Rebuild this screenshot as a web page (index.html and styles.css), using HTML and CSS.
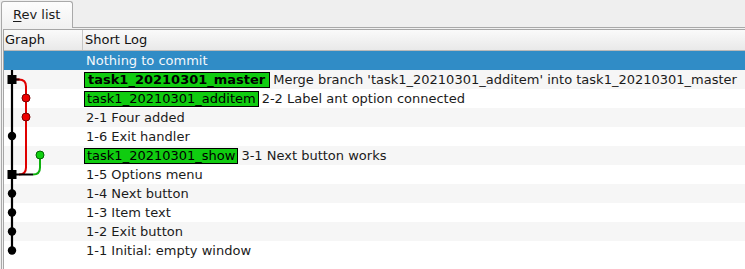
FILE: index.html
```html
<!DOCTYPE html>
<html>
<head>
<meta charset="utf-8">
<link rel="stylesheet" href="styles.css">
</head>
<body>
<div class="tabbar">
  <div class="tab"><span class="mn">R</span>ev list</div>
</div>
<div class="pane">
  <div class="tree">
    <div class="header">
      <div class="hcell hgraph">Graph</div>
      <div class="hcell hlog">Short Log</div>
    </div>
    <div class="rows">
      <svg class="graph-canvas" width="79" height="209" viewBox="0 0 79 209">
        <g transform="translate(-4,-51)">
          <line x1="12" y1="70" x2="12" y2="251" stroke="#000" stroke-width="2.2"/>
          <path d="M16 79.5 H19 Q26 79.5 26 86.5" fill="none" stroke="#e00000" stroke-width="2"/>
          <path d="M16 79.5 H19.5" fill="none" stroke="#300" stroke-width="2"/>
          <line x1="26" y1="86" x2="26" y2="168" stroke="#e00000" stroke-width="2"/>
          <path d="M26 167.5 Q26 174.5 19 174.5" fill="none" stroke="#e00000" stroke-width="2"/>
          <path d="M40 155.5 V167.5 Q40 174.5 33 174.5" fill="none" stroke="#10b010" stroke-width="2"/>
          <path d="M12 174.5 H33" fill="none" stroke="#000" stroke-width="2"/>
          <rect x="7.5" y="75" width="9" height="9" fill="#000"/>
          <rect x="7.5" y="170" width="9" height="9" fill="#000"/>
          <circle cx="26" cy="98" r="4" fill="#ee0000" stroke="#700" stroke-width="1"/>
          <circle cx="26" cy="117" r="4" fill="#ee0000" stroke="#700" stroke-width="1"/>
          <circle cx="40" cy="155" r="4" fill="#10d010" stroke="#060" stroke-width="1"/>
          <circle cx="12" cy="136" r="4.2" fill="#000"/>
          <circle cx="12" cy="193.5" r="4.2" fill="#000"/>
          <circle cx="12" cy="212.5" r="4.2" fill="#000"/>
          <circle cx="12" cy="231.5" r="4.2" fill="#000"/>
          <circle cx="12" cy="250.5" r="4.2" fill="#000"/>
        </g>
      </svg>
      <div class="row sel"><div class="gcell"></div><div class="lcell"><span class="txt">Nothing to commit</span></div></div>
      <div class="row alt"><div class="gcell"></div><div class="lcell"><span class="badge bold">task1_20210301_master</span><span class="msg">Merge branch 'task1_20210301_additem' into task1_20210301_master</span></div></div>
      <div class="row"><div class="gcell"></div><div class="lcell"><span class="badge">task1_20210301_additem</span><span class="msg">2-2 Label ant option connected</span></div></div>
      <div class="row alt"><div class="gcell"></div><div class="lcell"><span class="txt">2-1 Four added</span></div></div>
      <div class="row"><div class="gcell"></div><div class="lcell"><span class="txt">1-6 Exit handler</span></div></div>
      <div class="row alt"><div class="gcell"></div><div class="lcell"><span class="badge">task1_20210301_show</span><span class="msg">3-1 Next button works</span></div></div>
      <div class="row"><div class="gcell"></div><div class="lcell"><span class="txt">1-5 Options menu</span></div></div>
      <div class="row alt"><div class="gcell"></div><div class="lcell"><span class="txt">1-4 Next button</span></div></div>
      <div class="row"><div class="gcell"></div><div class="lcell"><span class="txt">1-3 Item text</span></div></div>
      <div class="row alt"><div class="gcell"></div><div class="lcell"><span class="txt">1-2 Exit button</span></div></div>
      <div class="row"><div class="gcell"></div><div class="lcell"><span class="txt">1-1 Initial: empty window</span></div></div>
    </div>
  </div>
</div>
</body>
</html>
```

FILE: styles.css
```css
html, body {
  margin: 0;
  padding: 0;
}
body {
  background: #efefef;
  font-family: "DejaVu Sans", sans-serif;
  font-size: 13px;
  color: #1b1b1b;
  overflow: hidden;
  width: 745px;
  height: 269px;
}
.tabbar {
  height: 28px;
  box-sizing: border-box;
  padding: 1px 0 0 1px;
  display: flex;
  align-items: flex-start;
}
.tab {
  position: relative;
  z-index: 1;
  width: 72px;
  height: 27px;
  box-sizing: border-box;
  border: 1px solid #a9a9a9;
  border-bottom: none;
  border-radius: 3px 3px 0 0;
  background: linear-gradient(#fdfdfd, #f1f1f1);
  padding: 4px 0 0 11px;
  line-height: 17px;
}
.mn {
  text-decoration: underline;
  text-underline-offset: 2px;
}
.pane {
  margin: -1px 0 0 1px;
  width: 760px;
  height: 242px;
  box-sizing: border-box;
  border: 1px solid #a9a9a9;
  border-bottom: none;
  padding: 1px 1px 0 1px;
  background: #f1f1f1;
}
.tree {
  box-sizing: border-box;
  height: 100%;
  overflow: hidden;
  border: 1px solid #a6a6a6;
  border-bottom: none;
  background: #fff;
}
.header {
  display: grid;
  grid-template-columns: 79px 1fr;
  height: 20px;
  border-bottom: 1px solid #b9b9b9;
  background: linear-gradient(#fafafa, #e9e9e9);
}
.hcell {
  line-height: 20px;
  color: #111;
}
.hgraph {
  padding-left: 1px;
  border-right: 1px solid #c6c6c6;
}
.hlog {
  padding-left: 2px;
}
.rows {
  position: relative;
}
.graph-canvas {
  position: absolute;
  left: 0;
  top: 0;
  z-index: 2;
}
.row {
  display: grid;
  grid-template-columns: 79px 1fr;
  height: 19px;
  background: #fff;
}
.row.alt {
  background: #f6f6f6;
}
.row.sel {
  background: #308cc6;
  color: #f4f8fc;
}
.lcell {
  display: flex;
  align-items: center;
  padding-left: 1px;
  white-space: nowrap;
}
.txt {
  margin-left: 2px;
  line-height: 19px;
}
.badge {
  box-sizing: border-box;
  height: 16px;
  margin-top: 1px;
  border: 1px solid #000;
  background: #10cc10;
  color: #000;
  padding: 0 2px 0 2px;
  line-height: 14px;
}
.badge.bold {
  font-weight: bold;
  padding: 0 4px 0 3px;
}
.msg {
  margin-left: 3px;
}
```
